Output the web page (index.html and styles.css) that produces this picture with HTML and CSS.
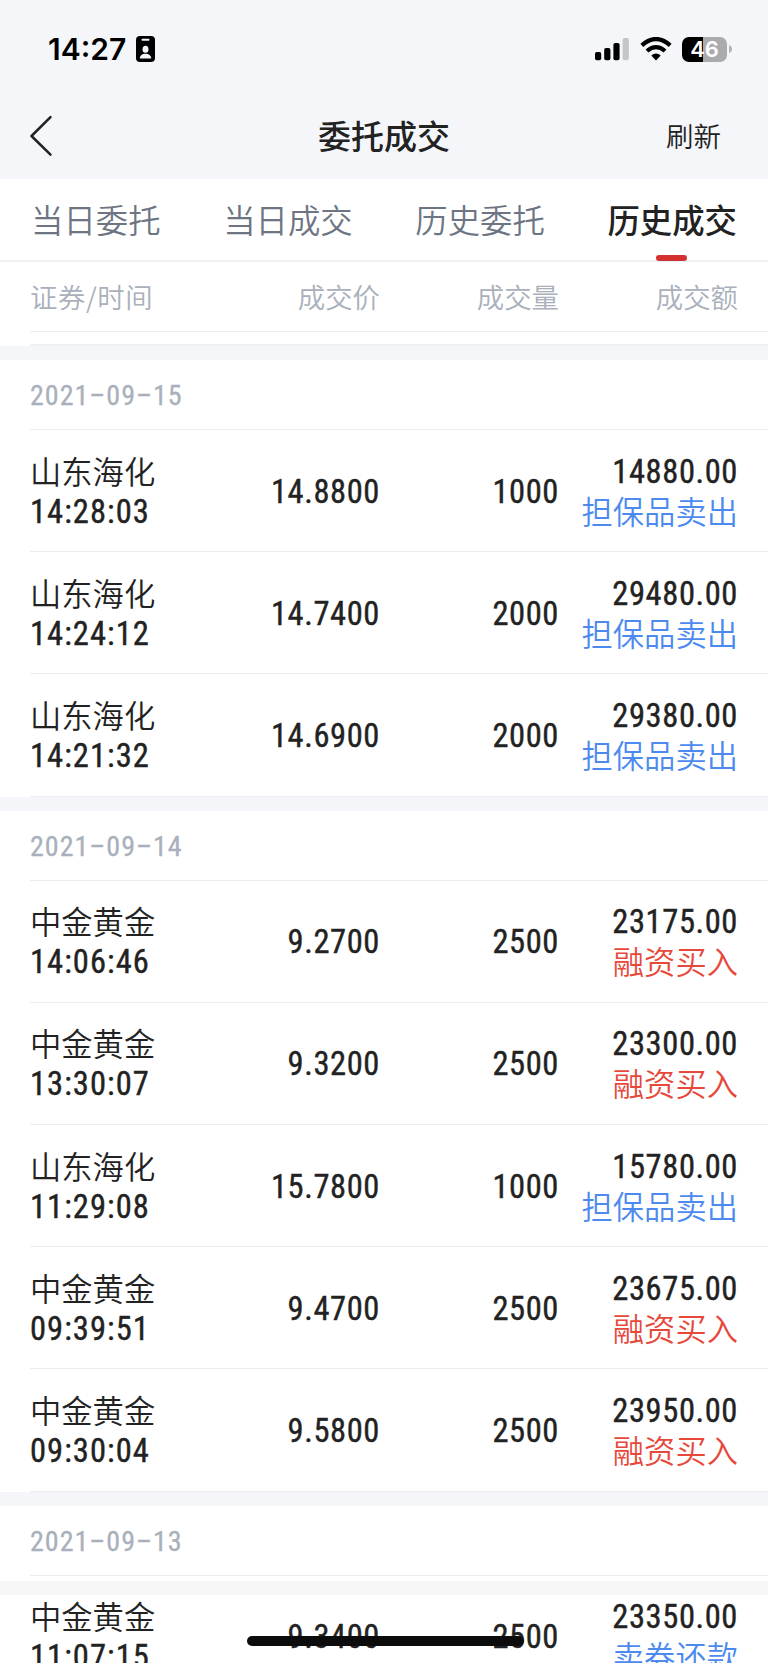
FILE: index.html
```
<!DOCTYPE html>
<html lang="zh-CN">
<head>
    <meta charset="UTF-8">
    <title>委托成交</title>
    <link rel="stylesheet" href="styles.css">
</head>
<body>
    <!-- Status bar -->
    <div class="status-bar">
        <span class="clock">14:27</span>
        <svg class="id-icon" width="19" height="26" viewBox="0 0 19 26">
            <rect width="19" height="26" rx="4" fill="#000"/>
            <rect x="5.5" y="2.8" width="8" height="2" rx="1" fill="#f4f6fa"/>
            <ellipse cx="9.5" cy="13.3" rx="3" ry="3.5" fill="#f4f6fa"/>
            <path d="M3.8 22.6c0-3 2.4-4.8 5.7-4.8s5.7 1.8 5.7 4.8z" fill="#f4f6fa"/>
        </svg>
        <div class="status-right">
            <svg width="35" height="24" viewBox="0 0 35 24">
                <rect x="0" y="15" width="6.2" height="8.3" rx="1.8"/>
                <rect x="9.2" y="11" width="6.2" height="12.3" rx="1.8"/>
                <rect x="18.4" y="6" width="6.2" height="17.3" rx="1.8"/>
                <rect x="27.6" y="1" width="6.2" height="22.3" rx="1.8" fill="#c5c6ca"/>
            </svg>
            <svg class="wifi" width="32" height="24" viewBox="0 0 32 24">
                <path d="M1.8 8.3Q16-4.2 30.2 8.3" fill="none" stroke="#000" stroke-width="4.2"/>
                <path d="M7 14Q16 6.2 25 14" fill="none" stroke="#000" stroke-width="4.2"/>
                <path d="M11.3 18.6Q16 14.6 20.7 18.6L16 23.4z"/>
            </svg>
            <div class="battery">46</div>
            <svg class="battery-tip" width="3" height="8" viewBox="0 0 3 8">
                <path d="M0 0Q3 1 3 4T0 8z" fill="#b3b4b8"/>
            </svg>
        </div>
    </div>

    <!-- Title bar -->
    <div class="nav">
        <svg class="back" width="24" height="42" viewBox="0 0 24 42">
            <path d="M21.5 2.2L2.5 21L21.5 39.6" fill="none" stroke="#222" stroke-width="2.5" stroke-linecap="round" stroke-linejoin="round"/>
        </svg>
        <div class="title">委托成交</div>
        <div class="refresh">刷新</div>
    </div>

    <!-- Tabs -->
    <div class="tabs">
        <div class="tab">当日委托</div>
        <div class="tab">当日成交</div>
        <div class="tab">历史委托</div>
        <div class="tab active">历史成交</div>
    </div>

    <div class="columns">
        <div>证券/时间</div>
        <div>成交价</div>
        <div>成交量</div>
        <div>成交额</div>
    </div>
    <div class="list-top"></div>

    <!-- Deals -->
    <div class="group">
        <div class="date">2021–09–15</div>
        <div class="row">
            <div class="stock"><p>山东海化</p><p class="num">14:28:03</p></div>
            <div class="num">14.8800</div>
            <div class="num">1000</div>
            <div class="amount"><p class="num">14880.00</p><p class="sell">担保品卖出</p></div>
        </div>
        <div class="row">
            <div class="stock"><p>山东海化</p><p class="num">14:24:12</p></div>
            <div class="num">14.7400</div>
            <div class="num">2000</div>
            <div class="amount"><p class="num">29480.00</p><p class="sell">担保品卖出</p></div>
        </div>
        <div class="row">
            <div class="stock"><p>山东海化</p><p class="num">14:21:32</p></div>
            <div class="num">14.6900</div>
            <div class="num">2000</div>
            <div class="amount"><p class="num">29380.00</p><p class="sell">担保品卖出</p></div>
        </div>
    </div>

    <div class="group">
        <div class="date">2021–09–14</div>
        <div class="row">
            <div class="stock"><p>中金黄金</p><p class="num">14:06:46</p></div>
            <div class="num">9.2700</div>
            <div class="num">2500</div>
            <div class="amount"><p class="num">23175.00</p><p class="buy">融资买入</p></div>
        </div>
        <div class="row">
            <div class="stock"><p>中金黄金</p><p class="num">13:30:07</p></div>
            <div class="num">9.3200</div>
            <div class="num">2500</div>
            <div class="amount"><p class="num">23300.00</p><p class="buy">融资买入</p></div>
        </div>
        <div class="row">
            <div class="stock"><p>山东海化</p><p class="num">11:29:08</p></div>
            <div class="num">15.7800</div>
            <div class="num">1000</div>
            <div class="amount"><p class="num">15780.00</p><p class="sell">担保品卖出</p></div>
        </div>
        <div class="row">
            <div class="stock"><p>中金黄金</p><p class="num">09:39:51</p></div>
            <div class="num">9.4700</div>
            <div class="num">2500</div>
            <div class="amount"><p class="num">23675.00</p><p class="buy">融资买入</p></div>
        </div>
        <div class="row">
            <div class="stock"><p>中金黄金</p><p class="num">09:30:04</p></div>
            <div class="num">9.5800</div>
            <div class="num">2500</div>
            <div class="amount"><p class="num">23950.00</p><p class="buy">融资买入</p></div>
        </div>
    </div>

    <div class="group">
        <div class="date">2021–09–13</div>
        <div class="row">
            <div class="stock"><p>中金黄金</p><p class="num">11:07:15</p></div>
            <div class="num">9.3400</div>
            <div class="num">2500</div>
            <div class="amount"><p class="num">23350.00</p><p class="sell">卖券还款</p></div>
        </div>
    </div>

    <!-- Bottom overlay -->
    <div class="bottom-strip"></div>
    <div class="home-indicator"></div>
</body>
</html>
```
FILE: styles.css
```
* {
    box-sizing: border-box;
}

body {
    margin: 0;
    position: relative;
    width: 768px;
    height: 1663px;
    overflow: hidden;
    background-color: #fff;
    color: #222;
    font-family: "Noto Sans CJK SC", sans-serif;
}

p {
    margin: 0;
}

/* Status bar */
.status-bar {
    display: flex;
    align-items: center;
    height: 98px;
    padding: 0 36px 0 48px;
    background-color: #f4f6fa;
}

.clock {
    width: 88px;
    color: #000;
    font-family: Inter, sans-serif;
    font-size: 30px;
    font-weight: 600;
}

.status-right {
    display: flex;
    align-items: center;
    margin-left: auto;
}

.wifi {
    margin-left: 10px;
}

.battery {
    width: 45px;
    height: 25px;
    margin-left: 10px;
    border-radius: 7px;
    background: linear-gradient(to right, #000 21px, #aaabaf 21px);
    color: #fff;
    font-family: Inter, sans-serif;
    font-size: 22px;
    font-weight: 600;
    line-height: 25px;
    text-align: center;
}

.battery-tip {
    margin-left: 2px;
}

/* Title bar */
.nav {
    display: grid;
    grid-template-columns: 120px 1fr 120px;
    align-items: center;
    height: 81px;
    padding: 0 47px 5px 29px;
    background-color: #f4f6fa;
}

.title {
    padding: 0 0 3px 18px;
    font-size: 33px;
    font-weight: 500;
    line-height: 48px;
    text-align: center;
}

.refresh {
    padding-bottom: 3px;
    font-size: 27.5px;
    font-weight: 350;
    line-height: 40px;
    text-align: right;
}

/* Tabs */
.tabs {
    display: flex;
    justify-content: space-between;
    height: 83px;
    padding: 0 31px;
    border-bottom: 2px solid #eff0f2;
}

.tab {
    position: relative;
    color: #6d7583;
    font-size: 32.4px;
    font-weight: 350;
    line-height: 80px;
}

.active {
    color: #222;
    font-weight: 500;
}

.active::after {
    content: "";
    position: absolute;
    left: 49px;
    top: 76px;
    width: 31px;
    height: 6px;
    border-radius: 3px;
    background-color: #d33030;
}

.columns,
.row {
    display: grid;
    grid-template-columns: 170px 180px 179px 1fr;
    align-items: center;
    margin-left: 30px;
    padding-right: 30px;
    border-bottom: 1px solid #ebedf0;
    text-align: right;
}

.columns {
    height: 70px;
    padding-bottom: 2px;
    color: #a9b0bb;
    font-size: 27.4px;
    font-weight: 350;
}

.columns div:first-child {
    letter-spacing: 0.6px;
}

.columns div:first-child,
.stock {
    text-align: left;
}

.list-top {
    height: 14px;
    margin-left: 30px;
    border-bottom: 2px solid #eff0f2;
}

/* Deal list */
.group {
    border-top: 14px solid #f4f6fa;
}

.date {
    height: 70px;
    margin-left: 30px;
    border-bottom: 1px solid #ebedf0;
    color: #a9b0bb;
    font-family: Roboto, sans-serif;
    font-size: 28px;
    font-weight: 400;
    font-stretch: 85%;
    letter-spacing: 1px;
    line-height: 71px;
    -webkit-text-stroke: 0.3px;
}

.row {
    height: 122.2px;
    font-size: 31.3px;
    font-weight: 350;
    line-height: 40px;
}

.num {
    padding-top: 2px;
    font-family: Roboto, sans-serif;
    font-size: 32.5px;
    font-weight: 400;
    font-stretch: 85%;
    letter-spacing: 0.6px;
    line-height: 38px;
    -webkit-text-stroke: 0.4px;
}

.stock .num {
    letter-spacing: 1.05px;
}

.sell {
    color: #4d8af0;
}

.buy {
    color: #e6493a;
}

/* Overlay */
.bottom-strip {
    position: absolute;
    left: 0;
    right: 0;
    top: 1581px;
    height: 14px;
    background-color: #f7f7f7;
}

.home-indicator {
    position: absolute;
    left: 247px;
    top: 1636px;
    width: 277px;
    height: 10px;
    border-radius: 5px;
    background-color: #0c0c0c;
}
```
